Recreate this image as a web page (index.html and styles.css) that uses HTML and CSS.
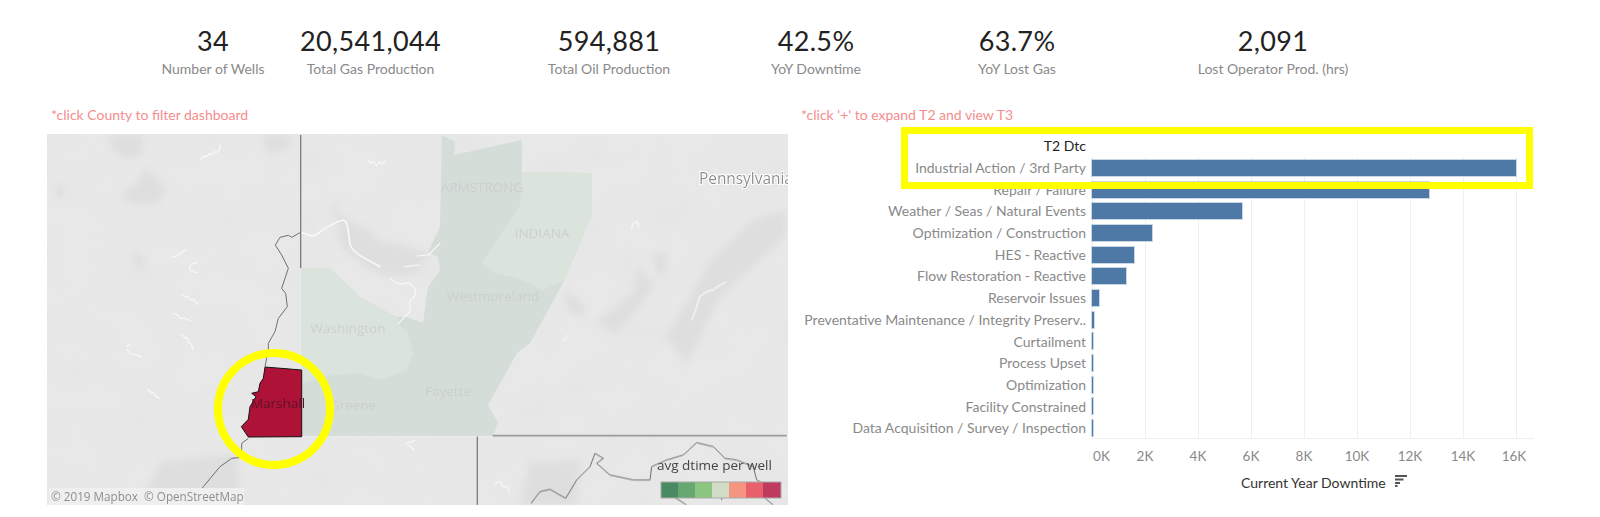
FILE: index.html
```html
<!DOCTYPE html>
<html lang="en">
<head>
<meta charset="utf-8">
<title>Downtime dashboard</title>
<link rel="stylesheet" href="styles.css">
</head>
<body>
<main class="page">
  <section class="kpis">
    <div class="kpi"><div class="kpi-value">34</div><div class="kpi-label">Number of Wells</div></div>
    <div class="kpi"><div class="kpi-value">20,541,044</div><div class="kpi-label">Total Gas Production</div></div>
    <div class="kpi"><div class="kpi-value">594,881</div><div class="kpi-label">Total Oil Production</div></div>
    <div class="kpi"><div class="kpi-value">42.5%</div><div class="kpi-label">YoY Downtime</div></div>
    <div class="kpi"><div class="kpi-value">63.7%</div><div class="kpi-label">YoY Lost Gas</div></div>
    <div class="kpi"><div class="kpi-value">2,091</div><div class="kpi-label">Lost Operator Prod. (hrs)</div></div>
  </section>
  <section class="panels">
    <div class="map-panel">
      <p class="note note-map">*click County to filter dashboard</p>
      <svg class="map" viewBox="47 134 741 371" role="img" aria-label="County map">
        <defs>
          <filter id="mottle" x="0" y="0" width="100%" height="100%">
            <feTurbulence type="fractalNoise" baseFrequency="0.018 0.026" numOctaves="4" seed="7"/>
            <feColorMatrix type="matrix" values="0 0 0 0 0.5  0 0 0 0 0.5  0 0 0 0 0.5  0.9 0 0 0 -0.38"/>
          </filter>
          <filter id="soft"><feGaussianBlur stdDeviation="0.45"/></filter>
          <filter id="wide" x="-10%" y="-10%" width="120%" height="120%"><feGaussianBlur stdDeviation="3"/></filter>
          <filter id="halo" x="-5%" y="-20%" width="110%" height="140%">
            <feMorphology in="SourceAlpha" operator="dilate" radius="0.8" result="d"/>
            <feFlood flood-color="#fff"/>
            <feComposite in2="d" operator="in"/>
            <feMerge><feMergeNode/><feMergeNode in="SourceGraphic"/></feMerge>
          </filter>
        </defs>
        <rect class="land" x="47" y="134" width="741" height="371"/>
        <rect class="mottle" x="47" y="134" width="741" height="371" filter="url(#mottle)"/>

        <g filter="url(#wide)">
          <g transform="translate(40 130) scale(.33333)">
            <path class="blob" d="M205 15 L310 15 L305 75 L250 85 L215 55Z"/>
            <path class="blob" d="M320 110 L345 145 L380 175 L360 215 L290 222 L250 205 L255 180 L290 165Z"/>
            <path class="blob" d="M55 160 L72 175 L70 200 L50 203 L45 175Z"/>
            <path class="blob" d="M670 15 L750 15 L745 55 L700 70 L675 50Z"/>
            <path class="blob" d="M280 370 L305 375 L318 410 L295 415 L282 395Z"/>
            <path class="blob" d="M875 205 L905 260 L985 300 L1010 330 L1100 350 L1165 370 L1130 430 L1050 440 L990 420 L905 350Z"/>
            <path class="blob" d="M360 1000 L590 970 L600 1125 L310 1125 L335 1050Z"/>
          </g>
          <g transform="translate(420 130) scale(.33333)">
            <path class="blob" d="M700 370 L740 365 L735 430 L712 435Z"/>
            <path class="blob" d="M430 490 L480 510 L500 555 L450 550Z"/>
            <path class="blob" d="M530 580 L640 490 L660 410 L700 470 L590 610Z"/>
            <path class="blob" d="M740 620 L880 380 L1000 270 L1095 240 L1095 320 L900 500 L800 700Z"/>
            <path class="blob" d="M330 1000 L480 990 L470 1125 L300 1125Z"/>
          </g>
        </g>

        <g filter="url(#soft)">
          <g transform="translate(40 130) scale(.33333)">
            <path class="lake" d="M482 88 l10 -10 l6 3 l10 -10 l6 3 l10 -9 l6 2 l8 -6 l3 -16"/>
            <path class="lake" d="M985 90 l8 10 l8 -6 l8 12 l8 -10 l8 6 l12 -10"/>
            <path class="lake" d="M397 382 l14 -4 l12 -10 l14 -8"/>
            <path class="lake" d="M472 398 C445 400 438 425 470 428"/>
            <path class="lake" d="M425 492 l10 10 l8 -4 l8 12 l10 0 l14 12"/>
            <path class="lake" d="M400 550 l12 4 l8 12 l12 -2 l18 8"/>
            <path class="lake" d="M425 612 l10 12 l6 -2 l4 14 l8 6 l6 16"/>
            <path class="lake" d="M260 650 l12 -8 M262 660 l12 14 l14 0 l14 6"/>
            <path class="lake" d="M322 778 l12 10 l6 -2 l6 12 l12 6"/>
            <path class="lake" d="M1100 940 l24 -8 M1106 945 l16 14"/>
          </g>
          <g transform="translate(420 130) scale(.33333)">
            <path class="lake" d="M635 298 l4 -18 l14 -6 l2 20"/>
            <path class="lake" d="M815 570 l12 -30 l12 -40 l20 -15 l20 -5 l20 -14 l18 -10"/>
            <path class="lake" d="M428 632 l8 -4 l6 -12"/>
            <path class="lake" d="M225 1060 l16 -6 l6 14 l14 2 l8 16"/>
          </g>
        </g>

        <g filter="url(#soft)">
          <path class="county-dark" d="M442 135 L455 142 L454 155 L521.7 140 L522 172 L592 173 L592 215 L563 283 L530 343 L517 353 L488 405 L498 423 L493 436 L300.7 436 L300.7 268 L330 268 L360 297 L397 317 L407 317 L423 323 L428 287 L440 270 L438 257 L428 252 L440 227Z"/>
          <path class="county-light" d="M300.7 268 L330 268 L360 297 L397 317 L400 327 L407 330 L413 353 L407 370 L380 380 L360 373 L333 375 L301 383Z"/>
          <path class="county-light" d="M522 172 L592 173 L592 215 L563 283 L558 283 L543 290 L517 278 L492 272 L482 263 L520 205Z"/>
        </g>

        <g transform="translate(40 130) scale(.33333)" filter="url(#soft)">
          <path class="river-white" d="M782 307 C800 310 810 322 825 316 C850 300 880 275 910 270 C925 275 925 310 930 345 C945 375 985 390 1020 410"/>
          <path class="river-white thin" d="M1050 445 C1065 460 1085 465 1105 458 C1125 470 1135 490 1118 505 C1100 520 1115 530 1110 545 L1075 580 M1130 378 L1165 375 L1200 340 M1095 410 L1140 405"/>
          <path class="river-dark" d="M782 307 L755 322 L745 316 L720 322 L706 345 L725 375 L745 415 L735 445 L725 475 L737 490 L742 530 L715 565 L705 605 L685 640 L685 660 L675 710"/>
          <path class="river-dark" d="M625 925 L605 940 L605 982 L575 985 L540 1010 L490 1070 L470 1100 L435 1125"/>
          <path class="state-line" d="M782 15 L782 415"/>
          <path class="state-line pale" d="M781 415 L781 920 L1360 920"/>
        </g>
        <g transform="translate(420 130) scale(.33333)" filter="url(#soft)">
          <path class="state-line" d="M218 917 L1100 917 M172 920 L172 1125"/>
          <path class="river-dark" d="M333 1120 L360 1085 L390 1078 L437 1105 L470 1050 L510 1010 L525 970 L550 985 L530 1000 L570 1035 L640 1050 L690 1050 L695 1010 L740 990 L790 975 L830 938 L880 950 L915 985 L950 990 L1000 1010 L1010 1050 L1040 1065 L1030 1100 L1060 1125"/>
          <path class="river-dark" d="M745 1090 L800 1125 M905 1097 L905 1110"/>
        </g>

        <path class="marshall" d="M265 367 L301.7 370 L301.7 436.7 L248.3 437 L241.3 426.7 L248.3 419.3 L250 406.7 L256 396.7 L251.7 393.3 L258.3 391.7 L260 383.3 L263.3 378.3Z"/>

        <g class="labels">
          <text x="348" y="333" class="county-label" text-anchor="middle">Washington</text>
          <text x="353" y="410" class="county-label" text-anchor="middle">Greene</text>
          <text x="448" y="396" class="county-label" text-anchor="middle">Fayette</text>
          <text x="482" y="192" class="county-label" text-anchor="middle">ARMSTRONG</text>
          <text x="542" y="238" class="county-label" text-anchor="middle">INDIANA</text>
          <text x="493" y="301" class="county-label" text-anchor="middle">Westmoreland</text>
          <text x="278" y="408" class="county-label selected" text-anchor="middle">Marshall</text>
          <text x="699" y="184" class="state-label" filter="url(#halo)">Pennsylvania</text>
        </g>

        <rect class="credit-bg" x="49" y="488" width="195" height="17"/>
        <text x="51" y="501" class="credit">© 2019 Mapbox  © OpenStreetMap</text>

        <text x="657" y="470" class="legend-title">avg dtime per well</text>
        <g class="legend">
          <rect x="661" y="482" width="17.5" height="16" fill="#4a8a63"/>
          <rect x="678" y="482" width="17.5" height="16" fill="#66a870"/>
          <rect x="695" y="482" width="17.5" height="16" fill="#8bc580"/>
          <rect x="712" y="482" width="17.5" height="16" fill="#d3dcc6"/>
          <rect x="729" y="482" width="17.5" height="16" fill="#f59480"/>
          <rect x="746" y="482" width="17.5" height="16" fill="#e9606a"/>
          <rect x="763" y="482" width="18" height="16" fill="#bf3a5f"/>
          <rect class="legend-frame" x="661" y="482" width="120" height="16"/>
        </g>

        <circle class="ring" cx="274" cy="409" r="56"/>
      </svg>
    </div>

    <div class="chart-panel">
      <p class="note">*click '+' to expand T2 and view T3</p>
      <div class="chart-head"><span class="chart-head-label">T2 Dtc</span></div>
      <div class="chart-body">
        <div class="row"><span class="row-label">Industrial Action / 3rd Party</span><span class="track"><span class="bar" style="width:424px"></span></span></div>
        <div class="row"><span class="row-label">Repair / Failure</span><span class="track"><span class="bar" style="width:337px"></span></span></div>
        <div class="row"><span class="row-label">Weather / Seas / Natural Events</span><span class="track"><span class="bar" style="width:150px"></span></span></div>
        <div class="row"><span class="row-label">Optimization / Construction</span><span class="track"><span class="bar" style="width:60px"></span></span></div>
        <div class="row"><span class="row-label">HES - Reactive</span><span class="track"><span class="bar" style="width:42px"></span></span></div>
        <div class="row"><span class="row-label">Flow Restoration - Reactive</span><span class="track"><span class="bar" style="width:34px"></span></span></div>
        <div class="row"><span class="row-label">Reservoir Issues</span><span class="track"><span class="bar" style="width:7px"></span></span></div>
        <div class="row"><span class="row-label">Preventative Maintenance / Integrity Preserv..</span><span class="track"><span class="bar" style="width:2px"></span></span></div>
        <div class="row"><span class="row-label">Curtailment</span><span class="track"><span class="bar" style="width:1px"></span></span></div>
        <div class="row"><span class="row-label">Process Upset</span><span class="track"><span class="bar" style="width:1px"></span></span></div>
        <div class="row"><span class="row-label">Optimization</span><span class="track"><span class="bar" style="width:1px"></span></span></div>
        <div class="row"><span class="row-label">Facility Constrained</span><span class="track"><span class="bar" style="width:1px"></span></span></div>
        <div class="row"><span class="row-label">Data Acquisition / Survey / Inspection</span><span class="track"><span class="bar" style="width:1px"></span></span></div>
      </div>
      <div class="ticks">
        <span class="tick tick-first">0K</span><span class="tick">2K</span><span class="tick">4K</span><span class="tick">6K</span><span class="tick">8K</span><span class="tick">10K</span><span class="tick">12K</span><span class="tick">14K</span><span class="tick tick-last">16K</span>
      </div>
      <div class="axis-title">
        <span>Current Year Downtime</span>
        <svg class="sort-icon" viewBox="0 0 12 12" aria-hidden="true"><path d="M0 1h12M0 4.5h8.5M0 8h5M0 11h2.5"/></svg>
      </div>
      <div class="highlight"></div>
    </div>
  </section>
</main>
</body>
</html>
```

FILE: styles.css
```css
* { box-sizing: border-box; }
html, body { margin: 0; padding: 0; background: #fff; }
body { font-family: "Lato", "Open Sans", sans-serif; overflow: hidden; }
.page { width: 1600px; height: 517px; }

.kpis {
  display: grid;
  grid-template-columns: 126px 189px 288px 126px 276px 236px;
  margin-left: 150px;
  padding-top: 24px;
  height: 107px;
  text-align: center;
}
.kpi-value { font-size: 27px; line-height: 33px; color: #222; letter-spacing: .35px; }
.kpi-label { font-size: 14px; line-height: 19px; margin-top: 2px; color: #8a8a8a; white-space: nowrap; }

.panels { display: flex; }
.note { margin: 0; height: 27px; font-size: 14px; line-height: 16px; color: #f58d8d; white-space: nowrap; }
.note-map { padding-left: 4px; }

.map-panel { width: 741px; margin-left: 47px; }
.map { display: block; width: 741px; height: 371px; }
.land { fill: #e8e8e8; }
.mottle { opacity: .12; }
.blob { fill: #dedede; }
.lake { fill: none; stroke: #f7f7f7; stroke-width: 4; stroke-linecap: round; stroke-linejoin: round; }
.county-dark { fill: #d4ddd8; }
.county-light { fill: #dbe4dc; }
.river-white { fill: none; stroke: #f8f8f8; stroke-width: 5; stroke-linecap: round; stroke-linejoin: round; }
.river-white.thin { stroke-width: 3.5; }
.river-dark { fill: none; stroke: #6e6e6e; stroke-width: 3; stroke-linejoin: round; }
.state-line { fill: none; stroke: #7d7d7d; stroke-width: 4; }
.state-line.pale { stroke: #ececec; stroke-width: 3; }
.marshall { fill: #ae1237; stroke: #141414; stroke-width: 1; stroke-linejoin: round; }
.county-label { font-family: "Open Sans", sans-serif; font-size: 13.5px; fill: #cbd0cd; }
.county-label.selected { fill: #5e1228; }
.state-label { font-family: "Open Sans", sans-serif; font-size: 15.4px; fill: #8a8a8a; }
.credit-bg { fill: #efefef; }
.credit { font-family: "Open Sans", sans-serif; font-size: 11.7px; fill: #8f8f8f; white-space: pre; }
.legend-title { font-family: "Open Sans", sans-serif; font-size: 13.5px; fill: #444; }
.legend-frame { fill: none; stroke: #aaa; stroke-width: 1; }
.ring { fill: none; stroke: #ffff00; stroke-width: 8; }

.chart-panel { position: relative; width: 733px; margin-left: 13px; }
.chart-head { display: grid; grid-template-columns: 285px; height: 23px; align-items: center; text-align: right; }
.chart-head-label { font-size: 14px; color: #222; }
.chart-body {
  display: grid;
  grid-auto-rows: 21.7px;
  width: 733px;
}
.row { display: grid; grid-template-columns: 285px 442px; column-gap: 6px; align-items: stretch; }
.row-label { font-size: 14px; line-height: 21.7px; color: #8a8a8a; text-align: right; white-space: nowrap; }
.track {
  display: flex;
  align-items: center;
  background: repeating-linear-gradient(90deg, #eeeff1 0 1px, transparent 1px 53px);
}
.row:last-child .track { border-bottom: 1px solid #eeeff1; }
.bar { display: block; height: 16px; background: #4e79a7; box-shadow: 0 0 0 1px #c9d6e6; }

.ticks { display: flex; margin-left: 264.5px; padding-top: 8px; height: 31px; }
.tick { flex: 0 0 53px; font-size: 13.5px; line-height: 18px; color: #8a8a8a; text-align: center; }
.tick-first { padding-left: 19px; }
.tick-last { margin-left: -2px; }

.axis-title {
  display: flex;
  align-items: center;
  gap: 9px;
  margin-left: 440px;
  height: 26px;
  font-size: 14px;
  color: #333;
  white-space: nowrap;
}
.sort-icon { width: 12px; height: 12px; margin-top: -4px; }
.sort-icon path { fill: none; stroke: #555; stroke-width: 1.8; }

.highlight {
  position: absolute;
  left: 100px;
  top: 20px;
  width: 632px;
  height: 62px;
  border: 7px solid #ffff00;
  pointer-events: none;
}
```
